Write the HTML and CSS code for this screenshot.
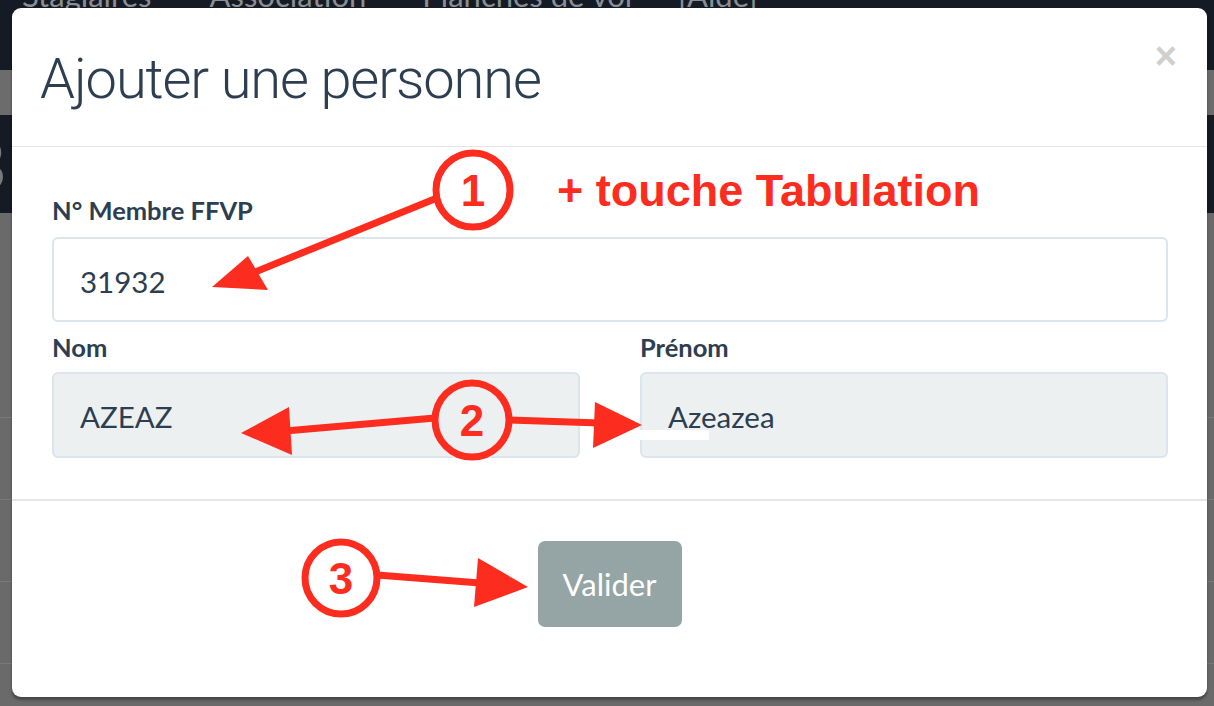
FILE: index.html
```html
<!DOCTYPE html>
<html lang="fr">
<head>
<meta charset="utf-8">
<title>Ajouter une personne</title>
<link rel="stylesheet" href="styles.css">
</head>
<body>
<div class="page">
  <nav class="navbar">
    <span class="nav-item">Stagiaires</span>
    <span class="nav-item">Association</span>
    <span class="nav-item">Planches de vol</span>
    <span class="nav-item">[Aide]</span>
  </nav>
  <div class="subbar"></div>
  <div class="banner"><span class="banner-text">B</span></div>
  <div class="content">
    <div class="content-title">r</div>
    <div class="row"></div>
    <div class="row"></div>
    <div class="row"></div>
    <div class="row"></div>
  </div>
</div>

<div class="modal">
  <div class="modal-header">
    <h1 class="modal-title">Ajouter une personne</h1>
    <span class="close">&times;</span>
  </div>
  <div class="modal-body">
    <div class="field">
      <label class="label">N° Membre FFVP</label>
      <div class="input">31932</div>
    </div>
    <div class="field-row">
      <div class="field">
        <label class="label">Nom</label>
        <div class="input disabled">AZEAZ</div>
      </div>
      <div class="field">
        <label class="label">Prénom</label>
        <div class="input disabled">Azeazea</div>
      </div>
    </div>
  </div>
  <div class="modal-footer">
    <button class="btn">Valider</button>
  </div>
</div>

<svg class="annotations" width="1214" height="706" viewBox="0 0 1214 706">
  <g fill="none" stroke="#fc2c1f" stroke-width="7">
    <circle cx="473" cy="190" r="37"/>
    <circle cx="472" cy="420" r="37"/>
    <circle cx="341" cy="578" r="36"/>
    <line x1="437" y1="198" x2="255" y2="272"/>
    <line x1="435" y1="418" x2="285" y2="431"/>
    <line x1="509" y1="420" x2="600" y2="423"/>
    <line x1="377" y1="575" x2="480" y2="583"/>
  </g>
  <g fill="#fc2c1f">
    <polygon points="212,287 248,256 268,290"/>
    <polygon points="241,433 289,407 292,455"/>
    <polygon points="642,425 595,402 593,448"/>
    <polygon points="528,587 478,558 474,607"/>
  </g>
  <rect x="640" y="430" width="69" height="10" fill="#ffffff"/>
  <g class="num" fill="#fc2c1f">
    <text x="473" y="206" text-anchor="middle">1</text>
    <text x="472" y="436" text-anchor="middle">2</text>
    <text x="341" y="594" text-anchor="middle">3</text>
  </g>
  <text class="note" x="557" y="206" fill="#fc2c1f">+ touche Tabulation</text>
</svg>
</body>
</html>
```

FILE: styles.css
```css
html, body {
  margin: 0;
  padding: 0;
}
body {
  width: 1214px;
  height: 706px;
  overflow: hidden;
  background: #6a6a6a;
  font-family: Lato, "Liberation Sans", sans-serif;
  position: relative;
}
.page {
  display: flex;
  flex-direction: column;
  height: 706px;
  overflow: hidden;
}
.navbar {
  height: 70px;
  flex: none;
  background: #141b24;
  display: flex;
  align-items: flex-start;
  padding-left: 22px;
  overflow: hidden;
}
.nav-item {
  color: #8a8f95;
  font-size: 31px;
  line-height: 1;
  margin-top: -20px;
  margin-right: 58px;
  white-space: nowrap;
}
.nav-item:nth-child(2) {
  margin-right: 56px;
}
.nav-item:nth-child(3) {
  margin-right: 46px;
}
.subbar {
  height: 45px;
  flex: none;
  background: #6c6c6c;
}
.banner {
  height: 98px;
  flex: none;
  background: #141b24;
  overflow: hidden;
}
.banner-text {
  display: block;
  color: #7a7a7a;
  font-size: 72px;
  line-height: 1;
  margin-left: -40px;
  margin-top: 12px;
}
.content {
  background: #6a6a6a;
  flex: 1;
  overflow: hidden;
}
.content-title {
  color: #3a3a3a;
  font-size: 60px;
  font-family: "Liberation Sans", sans-serif;
  line-height: 1;
  margin-left: -24px;
  padding-top: 78px;
  height: 126px;
}
.row {
  height: 81px;
  border-top: 1px solid #7a7a7a;
}

.modal {
  position: absolute;
  left: 12px;
  top: 8px;
  width: 1195px;
  height: 689px;
  background: #ffffff;
  border-radius: 9px;
  box-shadow: 0 3px 3px rgba(0, 0, 0, 0.35);
  display: flex;
  flex-direction: column;
  color: #2c3e50;
}
.modal-header {
  height: 138px;
  flex: none;
  border-bottom: 1px solid #e5e5e5;
  display: flex;
  justify-content: space-between;
  align-items: flex-start;
  padding: 0 30px 0 28px;
}
.modal-title {
  margin: 0;
  margin-top: 41px;
  font-family: Roboto, "Liberation Sans", sans-serif;
  font-weight: 300;
  font-size: 56px;
  line-height: 60px;
  color: #2c3e50;
  letter-spacing: -1.1px;
}
.close {
  margin-top: 28px;
  font-family: "Liberation Sans", sans-serif;
  font-weight: 700;
  font-size: 38px;
  line-height: 40px;
  color: #cfcfcf;
}
.modal-body {
  height: 352px;
  flex: none;
  padding: 0 39px 0 40px;
  display: flex;
  flex-direction: column;
}
.field-row {
  display: flex;
  gap: 60px;
}
.field-row .field {
  flex: 1;
}
.field {
  display: flex;
  flex-direction: column;
}
.label {
  font-weight: 700;
  font-size: 25.5px;
  line-height: 30px;
  margin-top: 48px;
  margin-bottom: 12px;
  color: #2c3e50;
}
.field-row .label {
  margin-top: 10px;
  margin-bottom: 10px;
}
.input {
  height: 85px;
  box-sizing: border-box;
  border: 2px solid #dce4ec;
  border-radius: 6px;
  padding: 4px 26px 0;
  display: flex;
  align-items: center;
  font-size: 29.5px;
  color: #2c3e50;
}
.input.disabled {
  background: #ecf0f1;
  height: 86px;
  padding-top: 2px;
}
.modal-footer {
  border-top: 2px solid #e5e5e5;
  flex: 1;
  display: flex;
  justify-content: center;
  align-items: flex-start;
  padding-top: 40px;
}
.btn {
  width: 144px;
  height: 86px;
  border: none;
  border-radius: 7px;
  background: #95a5a6;
  color: #ffffff;
  font-family: Lato, "Liberation Sans", sans-serif;
  font-size: 31px;
  padding: 0;
}
.annotations {
  position: absolute;
  left: 0;
  top: 0;
}
.num {
  font-family: "Liberation Sans", sans-serif;
  font-weight: 700;
  font-size: 44px;
}
.note {
  font-family: "Liberation Sans", sans-serif;
  font-weight: 700;
  font-size: 45px;
}
```
